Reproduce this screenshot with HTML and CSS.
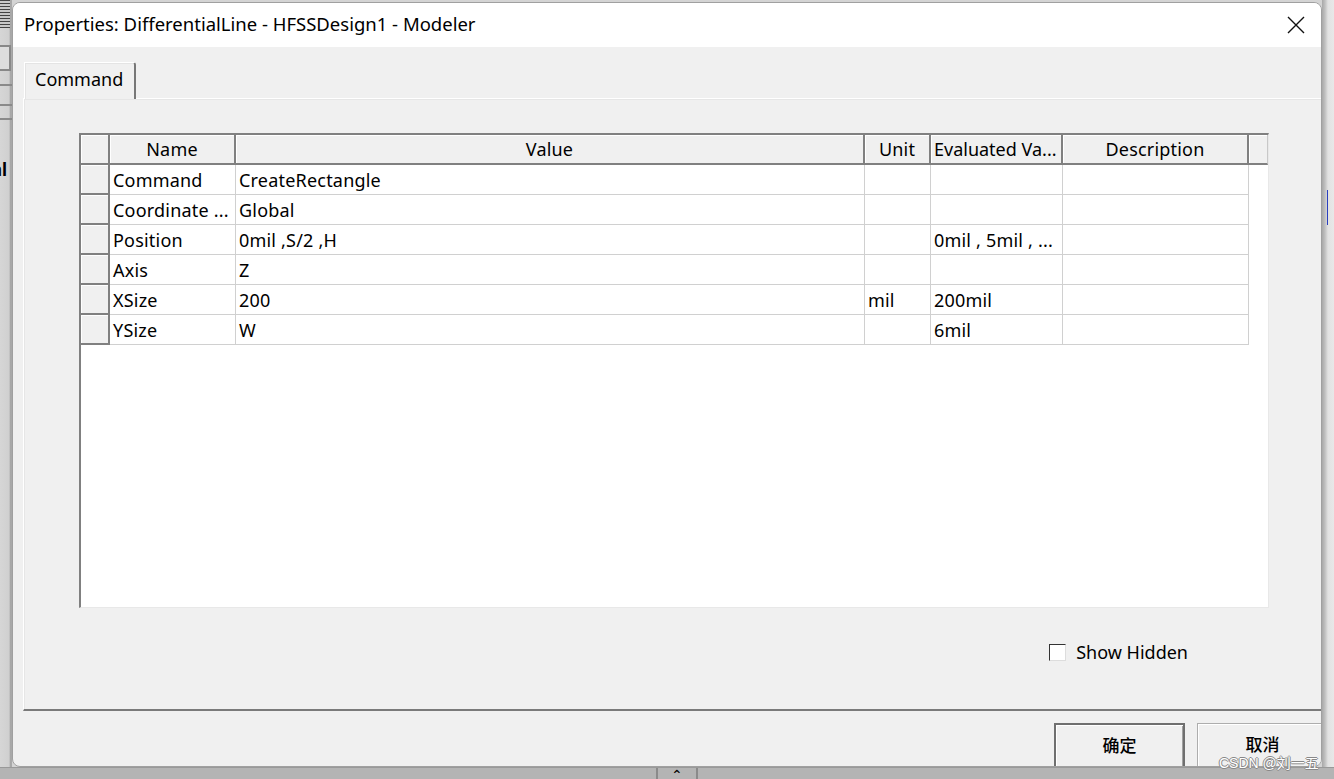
FILE: index.html
```html
<!DOCTYPE html>
<html>
<head>
<meta charset="utf-8">
<link rel="stylesheet" href="styles.css">
</head>
<body>
<div class="desk">
  <div class="left-strip">
    <div class="grip"></div>
    <div class="lbox"></div>
    <div class="lline l1"></div>
    <div class="lline l2"></div>
    <div class="lline l3"></div>
    <div class="ltext">nl</div>
  </div>
  <div class="dialog">
    <div class="titlebar">
      <span class="title">Properties: DifferentialLine - HFSSDesign1 - Modeler</span>
      <svg class="close" width="18" height="18" viewBox="0 0 18 18"><path d="M1 1 L17 17 M17 1 L1 17" stroke="#111" stroke-width="1.4" fill="none"/></svg>
    </div>
    <div class="body">
      <div class="tabs"><div class="tab">Command</div></div>
      <div class="panel">
        <div class="grid">
          <table>
            <thead>
              <tr>
                <th class="rh"></th>
                <th class="c-name">Name</th>
                <th class="c-val">Value</th>
                <th class="c-unit">Unit</th>
                <th class="c-eval left">Evaluated Va...</th>
                <th class="c-desc">Description</th>
                <th class="c-fill"></th>
              </tr>
            </thead>
            <tbody>
              <tr><td class="rh"></td><td>Command</td><td>CreateRectangle</td><td></td><td></td><td></td><td class="fill"></td></tr>
              <tr><td class="rh"></td><td>Coordinate ...</td><td>Global</td><td></td><td></td><td></td><td class="fill"></td></tr>
              <tr><td class="rh"></td><td>Position</td><td>0mil ,S/2 ,H</td><td></td><td>0mil , 5mil , ...</td><td></td><td class="fill"></td></tr>
              <tr><td class="rh"></td><td>Axis</td><td>Z</td><td></td><td></td><td></td><td class="fill"></td></tr>
              <tr><td class="rh"></td><td>XSize</td><td>200</td><td>mil</td><td>200mil</td><td></td><td class="fill"></td></tr>
              <tr><td class="rh"></td><td>YSize</td><td>W</td><td></td><td>6mil</td><td></td><td class="fill"></td></tr>
            </tbody>
          </table>
        </div>
        <div class="opts">
          <label class="check"><span class="box"></span><span>Show Hidden</span></label>
        </div>
      </div>
      <div class="buttons">
        <div class="btn default">确定</div>
        <div class="btn">取消</div>
      </div>
    </div>
  </div>
  <div class="right-strip"><div class="blue"></div></div>
</div>
<div class="bottom-strip"><div class="sb"><span>&#8963;</span></div></div>
<div class="watermark">CSDN @刘一五</div>
</body>
</html>
```
FILE: styles.css
```css
html, body {
  margin: 0;
  padding: 0;
}
body {
  width: 1334px;
  height: 779px;
  overflow: hidden;
  background: #d4d4d4;
  font-family: "Noto Sans", "Noto Sans CJK SC", sans-serif;
  color: #000;
  position: relative;
}
.desk {
  display: flex;
  height: 767px;
}
.left-strip {
  width: 12px;
  flex: none;
  position: relative;
  overflow: hidden;
  background: linear-gradient(to right, #d6d6d6 0, #d0d0d0 9px, #9a9a9a 11px, #b8b8b8 12px);
}
.grip {
  position: absolute; left: 0; top: 0; width: 10px; height: 28px;
  background: repeating-linear-gradient(to bottom, #444 0 1px, #c8c8c8 1px 3px);
}
.lbox {
  position: absolute; left: -4px; top: 45px; width: 11px; height: 22px;
  border: 2px solid #888; background: #ddd;
}
.lline { position: absolute; left: 0; width: 12px; height: 2px; background: #8a8a8a; }
.l1 { top: 84px; }
.l2 { top: 104px; }
.l3 { top: 118px; }
.ltext { position: absolute; left: -9px; top: 158px; font-size: 17px; font-weight: bold; }
.dialog {
  width: 1310px;
  height: 765px;
  margin-top: 2px;
  background: #f0f0f0;
  border-radius: 8px;
  overflow: hidden;
  box-sizing: border-box;
  border: 1px solid #a0a0a0;
  display: flex;
  flex-direction: column;
  flex: none;
}
.titlebar {
  height: 44px;
  flex: none;
  background: #fff;
  display: flex;
  align-items: center;
  justify-content: space-between;
  padding-left: 11px;
  padding-right: 16px;
  padding-bottom: 3px;
  box-sizing: border-box;
}
.title {
  font-size: 18.5px;
}
.close { margin-top: 3px; }
.body {
  flex: 1;
  display: flex;
  flex-direction: column;
  padding-left: 10px;
}
.tabs {
  margin-top: 15px;
  display: flex;
  height: 37px;
  padding-left: 1px;
}
.tab {
  width: 112px;
  height: 37px;
  box-sizing: border-box;
  border-top: 1px solid #fff;
  border-left: 1px solid #fff;
  border-right: 2px solid #777;
  border-top-right-radius: 3px;
  box-shadow: inset 1px 1px 0 #e4e4e4;
  font-size: 18px;
  padding: 4px 0 0 10px;
  background: #f0f0f0;
  position: relative;
  z-index: 1;
}
.panel {
  margin-top: -1px;
  height: 613px;
  box-sizing: border-box;
  border-top: 1px solid #fff;
  border-left: 1px solid #fff;
  border-bottom: 2px solid #7a7a7a;
  box-shadow: inset 1px 1px 0 #e6e6e6;
  padding: 34px 0 0 55px;
  display: flex;
  flex-direction: column;
}
.grid {
  width: 1190px;
  height: 475px;
  box-sizing: border-box;
  background: #fff;
  border-top: 2px solid #808080;
  border-left: 2px solid #808080;
  border-right: 1px solid #e8e8e8;
  border-bottom: 1px solid #e8e8e8;
}
table {
  border-collapse: separate;
  border-spacing: 0;
  table-layout: fixed;
  font-size: 18px;
  letter-spacing: 0.2px;
}
th {
  height: 30px;
  box-sizing: border-box;
  padding: 0;
  background: #f0f0f0;
  font-weight: normal;
  border-right: 2px solid #808080;
  border-bottom: 2px solid #808080;
  box-shadow: inset 1px 1px 0 #fff;
  text-align: center;
  white-space: nowrap;
  overflow: hidden;
}
th.left { text-align: left; padding-left: 3px; letter-spacing: 0; }
th.c-fill { border-right: 1px solid #c8c8c8; }
td {
  height: 30px;
  box-sizing: border-box;
  padding: 0 0 0 3px;
  border-right: 1px solid #d0d0d0;
  border-bottom: 1px solid #d0d0d0;
  white-space: nowrap;
  overflow: hidden;
}
td.rh {
  background: #f0f0f0;
  border-right: 2px solid #808080;
  border-bottom: 2px solid #808080;
  box-shadow: inset 1px 1px 0 #fff;
  padding: 0;
}
td.fill { border: none; background: #fff; }
.rh { width: 29px; }
.c-name { width: 126px; }
.c-val { width: 629px; }
.c-unit { width: 66px; }
.c-eval { width: 132px; }
.c-desc { width: 186px; }
.c-fill { width: 19px; }
.opts {
  display: flex;
  justify-content: flex-end;
  padding-right: 133px;
  margin-top: 32px;
}
.check {
  display: flex;
  align-items: center;
  gap: 10px;
  font-size: 18px;
}
.box {
  width: 17px;
  height: 17px;
  box-sizing: border-box;
  border: 1px solid #333;
  border-right-color: #ddd;
  border-bottom-color: #ddd;
  background: #fff;
}
.buttons {
  display: flex;
  justify-content: flex-end;
  gap: 12px;
  margin-top: 12px;
  margin-right: -7px;
}
.btn {
  width: 131px;
  height: 48px;
  box-sizing: border-box;
  border: 1px solid #adadad;
  border-right-color: #808080;
  border-bottom-color: #808080;
  background: #f0f0f0;
  box-shadow: inset 1px 1px 0 #fff;
  font-size: 17px;
  display: flex;
  justify-content: center;
  padding-top: 7px;
  font-family: "Noto Sans CJK SC", sans-serif;
  font-weight: 500;
}
.btn.default {
  border: 2px solid #6f6f6f;
  box-shadow: inset 1px 1px 0 #fff, inset -1px -1px 0 #a0a0a0;
}
.right-strip {
  flex: 1;
  position: relative;
  background: linear-gradient(to right, #a8a8a8 0, #c0c0c0 3px, #e2e2e2 6px, #e8e8e8 100%);
}
.blue {
  position: absolute; left: 5px; top: 190px; width: 1px; height: 35px; background: #2a3fc0;
}
.bottom-strip {
  height: 12px;
  background: #b4b4b4;
  border-top: 1px solid #999;
  position: relative;
}
.sb {
  position: absolute;
  left: 656px;
  top: 0;
  width: 42px;
  height: 12px;
  border-left: 2px solid #8a8a8a;
  border-right: 2px solid #8a8a8a;
  box-sizing: border-box;
  display: flex;
  justify-content: center;
  font-size: 14px;
  line-height: 12px;
}
.sb span { display: block; margin-top: 1px; }
.watermark {
  position: absolute;
  left: 1219px;
  top: 752px;
  font-family: "Liberation Sans", "Noto Sans CJK SC", sans-serif;
  font-size: 14px;
  color: #fff;
  text-shadow: 1px 0 0 #888, -1px 0 0 #888, 0 1px 0 #888, 0 -1px 0 #888;
}
```
